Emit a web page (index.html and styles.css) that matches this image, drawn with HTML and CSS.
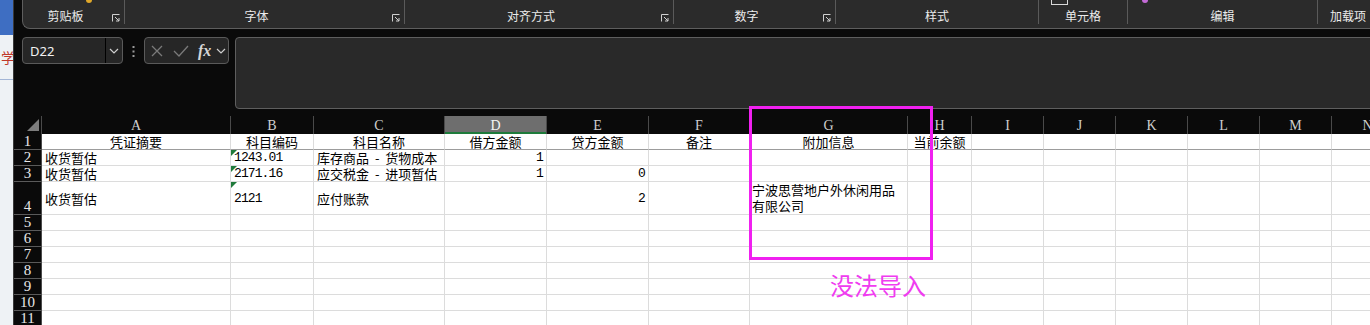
FILE: index.html
```html
<!DOCTYPE html>
<html lang="zh-CN">
<head>
    <meta charset="UTF-8">
    <title>凭证导入 - Excel</title>
    <link rel="stylesheet" href="styles.css">
</head>
<body>
<div class="app">
    <div class="side">
        <div class="side-top"></div>
        <div class="side-mark">学</div>
        <div class="side-line"></div>
    </div>

    <div class="excel">
        <!-- ribbon group labels -->
        <div class="ribbon">
            <div class="ribbon-panel">
                <div class="group g1">
                    <span class="peek-yellow"></span>
                    <span class="group-label">剪贴板</span>
                    <svg class="launcher" viewBox="0 0 8 8"><path d="M0.5 7.5V0.5H7.5M3 3L7 7M7 4V7H4"/></svg>
                </div>
                <div class="group g2">
                    <span class="group-label">字体</span>
                    <svg class="launcher" viewBox="0 0 8 8"><path d="M0.5 7.5V0.5H7.5M3 3L7 7M7 4V7H4"/></svg>
                </div>
                <div class="group g3">
                    <span class="group-label">对齐方式</span>
                    <svg class="launcher" viewBox="0 0 8 8"><path d="M0.5 7.5V0.5H7.5M3 3L7 7M7 4V7H4"/></svg>
                </div>
                <div class="group g4">
                    <span class="group-label">数字</span>
                    <svg class="launcher" viewBox="0 0 8 8"><path d="M0.5 7.5V0.5H7.5M3 3L7 7M7 4V7H4"/></svg>
                </div>
                <div class="group g5">
                    <span class="group-label">样式</span>
                </div>
                <div class="group g6">
                    <span class="peek-grid"></span>
                    <span class="group-label">单元格</span>
                </div>
                <div class="group g7">
                    <span class="peek-purple"></span>
                    <span class="group-label">编辑</span>
                </div>
                <div class="group g8">
                    <span class="group-label">加载项</span>
                </div>
            </div>
        </div>

        <!-- name box + formula bar -->
        <div class="formula-row">
            <div class="namebox">
                <span class="cellref">D22</span>
                <span class="nb-sep"></span>
                <span class="nb-drop">
                    <svg width="10" height="6" viewBox="0 0 10 6"><path class="chev" d="M1 1l4 4 4-4"/></svg>
                </span>
            </div>
            <div class="dots">
                <svg width="3" height="11" viewBox="0 0 3 11"><rect x="0.5" y="0" width="2" height="2"/><rect x="0.5" y="4.5" width="2" height="2"/><rect x="0.5" y="9" width="2" height="2"/></svg>
            </div>
            <div class="fxbox">
                <svg class="fx-cancel" width="12" height="12" viewBox="0 0 12 12"><path d="M1 1l10 10M11 1L1 11"/></svg>
                <svg class="fx-enter" width="16" height="12" viewBox="0 0 16 12"><path d="M1 6l5 5L15 1"/></svg>
                <span class="fx">fx</span>
                <svg class="fx-drop" width="10" height="6" viewBox="0 0 10 6"><path class="chev" d="M1 1l4 4 4-4"/></svg>
            </div>
            <div class="formula-bar"></div>
        </div>

        <!-- worksheet -->
        <table class="grid">
            <colgroup>
                <col class="w-rh">
                <col class="w-a"><col class="w-b"><col class="w-c"><col class="w-d"><col class="w-e">
                <col class="w-f"><col class="w-g"><col class="w-h"><col class="w-n"><col class="w-n">
                <col class="w-n"><col class="w-n"><col class="w-n"><col class="w-n">
            </colgroup>
            <tr class="colhead">
                <th class="corner"><svg width="12" height="12" viewBox="0 0 12 12"><polygon points="12,0 12,12 0,12"/></svg></th>
                <th>A</th><th>B</th><th>C</th><th class="sel">D</th><th>E</th><th>F</th><th>G</th>
                <th>H</th><th>I</th><th>J</th><th>K</th><th>L</th><th>M</th><th>N</th>
            </tr>
            <tr class="head">
                <th class="rh">1</th>
                <td>凭证摘要</td><td>科目编码</td><td>科目名称</td><td>借方金额</td><td>贷方金额</td>
                <td>备注</td><td>附加信息</td><td>当前余额</td>
                <td></td><td></td><td></td><td></td><td></td><td></td>
            </tr>
            <tr>
                <th class="rh">2</th>
                <td>收货暂估</td><td class="txt num">1243.01</td><td class="sp">库存商品 - 货物成本</td><td class="num r">1</td><td></td>
                <td></td><td></td><td></td>
                <td></td><td></td><td></td><td></td><td></td><td></td>
            </tr>
            <tr>
                <th class="rh">3</th>
                <td>收货暂估</td><td class="txt num">2171.16</td><td class="sp">应交税金 - 进项暂估</td><td class="num r">1</td><td class="num r">0</td>
                <td></td><td></td><td></td>
                <td></td><td></td><td></td><td></td><td></td><td></td>
            </tr>
            <tr class="tall">
                <th class="rh">4</th>
                <td>收货暂估</td><td class="txt num">2121</td><td>应付账款</td><td></td><td class="num r">2</td>
                <td></td><td class="wrap">宁波思营地户外休闲用品<br>有限公司</td><td></td>
                <td></td><td></td><td></td><td></td><td></td><td></td>
            </tr>
            <tr><th class="rh">5</th><td></td><td></td><td></td><td></td><td></td><td></td><td></td><td></td><td></td><td></td><td></td><td></td><td></td><td></td></tr>
            <tr><th class="rh">6</th><td></td><td></td><td></td><td></td><td></td><td></td><td></td><td></td><td></td><td></td><td></td><td></td><td></td><td></td></tr>
            <tr><th class="rh">7</th><td></td><td></td><td></td><td></td><td></td><td></td><td></td><td></td><td></td><td></td><td></td><td></td><td></td><td></td></tr>
            <tr><th class="rh">8</th><td></td><td></td><td></td><td></td><td></td><td></td><td></td><td></td><td></td><td></td><td></td><td></td><td></td><td></td></tr>
            <tr><th class="rh">9</th><td></td><td></td><td></td><td></td><td></td><td></td><td></td><td></td><td></td><td></td><td></td><td></td><td></td><td></td></tr>
            <tr><th class="rh">10</th><td></td><td></td><td></td><td></td><td></td><td></td><td></td><td></td><td></td><td></td><td></td><td></td><td></td><td></td></tr>
            <tr><th class="rh">11</th><td></td><td></td><td></td><td></td><td></td><td></td><td></td><td></td><td></td><td></td><td></td><td></td><td></td><td></td></tr>
        </table>
    </div>
</div>

<!-- annotation drawn over the sheet -->
<div class="callout-box"></div>
<div class="callout-text">没法导入</div>
</body>
</html>
```

FILE: styles.css
```css
body {
    margin: 0;
    width: 1370px;
    height: 325px;
    overflow: hidden;
    position: relative;
    background-color: #0a0a0a;
    font-family: "Noto Sans CJK SC", sans-serif;
}
.app {
    display: flex;
    height: 325px;
}

/* strip of the window behind */
.side {
    flex: none;
    width: 13px;
    background-color: #eef2f5;
    border-right: 1px solid #3a3a3a;
    overflow: hidden;
}
.side-top {
    height: 35px;
    background-color: #3e6ec2;
}
.side-mark {
    margin: 14px 0 0 1px;
    color: #c0392b;
    font-size: 14px;
    line-height: 16px;
    white-space: nowrap;
}
.side-line {
    height: 1px;
    margin-top: 14px;
    background-color: #a3b6d6;
}

.excel {
    flex: 1;
    min-width: 0;
    overflow: hidden;
    display: flex;
    flex-direction: column;
}

/* ribbon */
.ribbon {
    flex: none;
    height: 29px;
    padding-left: 8px;
}
.ribbon-panel {
    display: flex;
    height: 29px;
    box-sizing: border-box;
    margin-right: -30px;
    background-color: #2b2b2b;
    border-left: 1px solid #5e5e5e;
    border-bottom: 1px solid #5e5e5e;
    border-bottom-left-radius: 8px;
}
.group {
    position: relative;
    flex: none;
    display: flex;
    align-items: flex-end;
    height: 24px;
    box-sizing: border-box;
    border-right: 1px solid #5a5a5a;
}
.g1 { width: 102px; }
.g2 { width: 280px; }
.g3 { width: 269px; }
.g4 { width: 162px; }
.g5 { width: 203px; }
.g6 { width: 89px; }
.g7 { width: 190px; }
.g8 { width: 60px; border-right: none; }
.group-label {
    flex: 1;
    padding-bottom: 1px;
    text-align: center;
    color: #ececec;
    font-size: 12px;
    line-height: 14px;
    white-space: nowrap;
}
.launcher {
    flex: none;
    width: 8px;
    height: 8px;
    margin: 0 4px 2px 4px;
    fill: none;
    stroke: #d0d0d0;
    stroke-width: 1;
}
.peek-yellow {
    position: absolute;
    left: 63px;
    top: 0;
    width: 6px;
    height: 3px;
    background-color: #e0a82a;
    border-radius: 0 0 3px 3px;
}
.peek-grid {
    position: absolute;
    left: 12px;
    top: 0;
    width: 15px;
    height: 4px;
    border: 1px solid #d8d8d8;
    border-top: none;
}
.peek-purple {
    position: absolute;
    left: 14px;
    top: 0;
    width: 6px;
    height: 3px;
    background-color: #c36ad6;
    border-radius: 0 0 3px 3px;
}

/* name box and formula bar */
.formula-row {
    flex: none;
    display: flex;
    align-items: flex-start;
    height: 72px;
    margin: 8px 0 7px 8px;
}
.namebox {
    flex: none;
    display: flex;
    align-items: center;
    width: 101px;
    height: 27px;
    box-sizing: border-box;
    background-color: #262626;
    border: 1px solid #5a5a5a;
    border-radius: 4px;
}
.cellref {
    flex: 1;
    padding-left: 7px;
    color: #f2f2f2;
    font-family: "Noto Sans", sans-serif;
    font-size: 13px;
}
.nb-sep {
    align-self: stretch;
    width: 1px;
    background-color: #000;
}
.nb-drop {
    display: flex;
    justify-content: center;
    width: 16px;
}
.chev {
    fill: none;
    stroke: #cfcfcf;
    stroke-width: 1.2;
}
.dots {
    flex: none;
    display: flex;
    justify-content: center;
    width: 21px;
    padding-top: 9px;
}
.dots svg {
    fill: #9a9a9a;
}
.fxbox {
    flex: none;
    display: flex;
    align-items: center;
    width: 85px;
    height: 27px;
    box-sizing: border-box;
    background-color: #262626;
    border: 1px solid #5a5a5a;
    border-radius: 4px;
}
.fx-cancel,
.fx-enter {
    fill: none;
    stroke: #7a7a7a;
    stroke-width: 1.3;
}
.fx-cancel { margin-left: 6px; }
.fx-enter { margin-left: 10px; }
.fx {
    margin-left: 9px;
    color: #d6d6d6;
    font-family: "Liberation Serif", serif;
    font-style: italic;
    font-weight: bold;
    font-size: 16px;
    line-height: 18px;
}
.fx-drop { margin-left: 5px; }
.formula-bar {
    flex: 1;
    height: 72px;
    margin: 0 -10px 0 6px;
    box-sizing: border-box;
    background-color: #292929;
    border: 1px solid #5e5e5e;
    border-radius: 4px;
}

/* worksheet */
.grid {
    flex: none;
    width: 1390px;
    table-layout: fixed;
    border-collapse: separate;
    border-spacing: 0;
}
.w-rh { width: 28px; }
.w-a { width: 189px; }
.w-b { width: 83px; }
.w-c { width: 131px; }
.w-d { width: 102px; }
.w-e { width: 102px; }
.w-f { width: 101px; }
.w-g { width: 158px; }
.w-h { width: 64px; }
.w-n { width: 72px; }

.grid tr { height: 16px; }
.grid tr.colhead { height: 18px; }
.grid tr.tall { height: 32px; }

.colhead th {
    padding: 0;
    background-color: #0a0a0a;
    border-right: 1px solid #4a4a4a;
    color: #cfcfcf;
    font-family: "Liberation Serif", serif;
    font-weight: normal;
    font-size: 14px;
    line-height: 17px;
}
.colhead th.sel {
    background-color: #6e6e6e;
    color: #f4f4f4;
    box-shadow: inset 0 -2px 0 #1e7b3b;
}
.colhead th.corner {
    text-align: right;
    vertical-align: bottom;
    padding: 0 2px 3px 0;
    line-height: 0;
}
.corner svg {
    fill: #7c7c7c;
}
.rh {
    padding: 0;
    background-color: #0a0a0a;
    border-right: 1px solid #4a4a4a;
    border-bottom: 1px solid #5a5a5a;
    color: #e8e8e8;
    font-family: "Liberation Serif", serif;
    font-weight: normal;
    font-size: 15px;
    line-height: 15px;
    text-align: center;
    vertical-align: bottom;
}
.grid td {
    padding: 0 3px;
    background-color: #fff;
    border-right: 1px solid #dcdcdc;
    border-bottom: 1px solid #dcdcdc;
    color: #000;
    font-size: 13px;
    line-height: 15px;
    white-space: nowrap;
    vertical-align: middle;
}
.grid tr.head td {
    text-align: center;
    border-bottom-color: #9c9c9c;
}
.grid td.num {
    font-family: "Liberation Mono", monospace;
    font-size: 13px;
    letter-spacing: -0.9px;
}
.grid td.r {
    text-align: right;
}
.grid td.sp {
    word-spacing: 3px;
}
.grid td.txt {
    position: relative;
}
.grid td.txt::before {
    content: "";
    position: absolute;
    left: 0;
    top: 0;
    border-top: 6px solid #1f7a3a;
    border-right: 6px solid transparent;
}
.grid td.wrap {
    padding-left: 2px;
    line-height: 16px;
}

/* annotation */
.callout-box {
    position: absolute;
    left: 749px;
    top: 106px;
    width: 184px;
    height: 154px;
    box-sizing: border-box;
    border: 3px solid #f020f0;
}
.callout-text {
    position: absolute;
    left: 830px;
    top: 272px;
    color: #f03cf0;
    font-size: 24px;
    line-height: 26px;
}
```
